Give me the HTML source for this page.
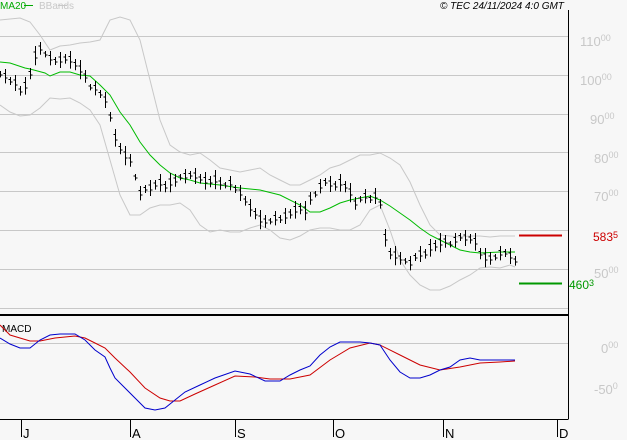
<!DOCTYPE html>
<html><head><meta charset="utf-8"><style>
html,body{margin:0;padding:0;background:#f7f7f7;}
svg{display:block;font-family:"Liberation Sans",sans-serif;}
</style></head><body>
<svg id="s" width="627" height="440" xmlns="http://www.w3.org/2000/svg">
<rect width="627" height="440" fill="#f7f7f7"/>
<g stroke="#c8c8c8" stroke-width="1">
<line x1="0" y1="36.5" x2="568" y2="36.5"/><line x1="0" y1="75.5" x2="568" y2="75.5"/>
<line x1="0" y1="114.5" x2="568" y2="114.5"/><line x1="0" y1="152.5" x2="568" y2="152.5"/>
<line x1="0" y1="191.5" x2="568" y2="191.5"/><line x1="0" y1="230.5" x2="568" y2="230.5"/>
<line x1="0" y1="269.5" x2="568" y2="269.5"/><line x1="0" y1="308.5" x2="568" y2="308.5"/>
<line x1="0" y1="343.5" x2="568" y2="343.5"/>
</g>
<g fill="#c8c8c8" font-size="13">
<text x="580" y="46">110<tspan font-size="9" dy="-5">00</tspan></text>
<text x="580" y="85">100<tspan font-size="9" dy="-5">00</tspan></text>
<text x="590" y="124">90<tspan font-size="9" dy="-5">00</tspan></text>
<text x="594" y="163">80<tspan font-size="9" dy="-5">00</tspan></text>
<text x="594" y="201">70<tspan font-size="9" dy="-5">00</tspan></text>
<text x="594" y="278">50<tspan font-size="9" dy="-5">00</tspan></text>
<text x="601" y="353">0<tspan font-size="9" dy="-5">00</tspan></text>
<text x="594" y="394">-50<tspan font-size="9" dy="-5">0</tspan></text>
</g>
<text x="593" y="241" fill="#cc0000" font-size="12">583<tspan font-size="9" dy="-3">5</tspan></text>
<text x="569" y="289" fill="#009900" font-size="12">460<tspan font-size="9" dy="-3">3</tspan></text>
<line x1="519" y1="235.5" x2="562" y2="235.5" stroke="#cc0000" stroke-width="2"/>
<line x1="519" y1="283.5" x2="562" y2="283.5" stroke="#009900" stroke-width="2"/>
<line x1="568.5" y1="10" x2="568.5" y2="419" stroke="#000"/>
<line x1="0" y1="315" x2="568" y2="315" stroke="#000" stroke-width="2"/>
<line x1="0" y1="419.5" x2="568.5" y2="419.5" stroke="#000"/>
<g stroke="#000"><line x1="21.5" y1="419" x2="21.5" y2="437"/><line x1="130.5" y1="419" x2="130.5" y2="437"/><line x1="235.5" y1="419" x2="235.5" y2="437"/><line x1="333.5" y1="419" x2="333.5" y2="437"/><line x1="443.5" y1="419" x2="443.5" y2="437"/><line x1="557.5" y1="419" x2="557.5" y2="437"/></g>
<g font-size="13" fill="#000"><text x="23" y="438">J</text><text x="132" y="438">A</text><text x="237" y="438">S</text><text x="335" y="438">O</text><text x="445" y="438">N</text><text x="559" y="438">D</text></g>
<text x="2" y="332" font-size="10" fill="#000">MACD</text>
<text x="0" y="9" font-size="10" fill="#00aa00">MA20</text><line x1="24" y1="5.5" x2="33" y2="5.5" stroke="#00aa00"/>
<text x="39" y="9" font-size="10" fill="#c8c8c8">BBands</text><line x1="58" y1="5.5" x2="67" y2="5.5" stroke="#c8c8c8"/>
<text x="440" y="9" font-size="10" font-style="italic" fill="#000">© TEC 24/11/2024 4:0 GMT</text>
<g id="g"></g>
</svg>
<script>
function P(a){var s=[];for(var i=0;i<a.length;i+=2)s.push(a[i]+','+a[i+1]);return s.join(' ');}
var g=document.getElementById('g'),ns='http://www.w3.org/2000/svg';
function line(a,c,w){var p=document.createElementNS(ns,'polyline');p.setAttribute('points',P(a));p.setAttribute('fill','none');p.setAttribute('stroke',c);p.setAttribute('stroke-width',w||1);g.appendChild(p);}
line([0,20,10,19,20,18,30,22,40,35,50,50,60,46,70,45,80,43,90,42,100,40,105,30,110,20,120,17,130,20,140,40,150,80,160,120,170,145,180,152,190,155,200,153,210,160,220,168,230,170,240,172,250,170,260,168,270,175,280,180,290,185,300,185,310,180,320,175,330,168,340,165,350,160,360,155,370,155,380,153,390,158,400,165,410,182,420,205,430,225,440,235,450,236,460,237,470,236,480,236,490,237,500,236,515,236],'#c8c8c8');
line([0,105,10,112,20,116,30,115,40,108,50,98,60,99,70,98,80,103,90,110,100,125,110,160,120,195,130,215,140,215,150,208,160,205,170,205,180,203,190,210,200,225,210,232,220,230,230,232,240,232,250,228,260,225,270,230,280,238,290,240,300,236,310,230,320,228,330,228,340,230,350,230,360,225,370,210,380,205,390,230,400,260,410,275,420,285,430,290,440,290,450,286,460,280,470,275,480,268,490,267,500,268,510,265,515,267],'#c8c8c8');
line([0,62,10,63,25,68,30,69,45,73,50,76,60,72,70,72,80,75,90,76,100,85,110,95,120,112,130,125,140,142,150,155,160,165,170,173,180,178,190,180,200,183,220,185,240,188,260,190,280,195,300,205,310,212,320,212,330,208,340,203,350,200,360,198,370,196,380,200,390,206,400,213,410,220,420,228,430,235,440,240,450,245,460,250,470,252,480,253,500,252,515,252],'#00bb00');
var c=[0,75,5,78,10,82,15,85,20,92,25,88,30,75,35,58,40,50,45,55,50,60,55,62,60,62,65,60,70,62,75,66,80,72,85,78,90,88,95,90,100,95,105,102,110,118,115,140,120,150,125,158,130,162,135,178,140,195,145,190,150,190,155,186,160,185,165,188,170,185,175,182,180,178,185,178,190,176,195,178,200,180,205,183,210,183,215,182,220,185,225,186,230,185,235,190,240,195,245,202,250,210,255,215,260,222,265,223,270,222,275,220,280,220,285,218,290,215,295,212,300,210,305,213,310,200,315,195,320,188,325,183,330,186,335,187,340,185,345,188,350,195,355,205,360,200,365,198,370,200,375,198,380,205,385,240,390,255,395,258,400,260,405,262,410,265,415,258,420,256,425,255,430,250,435,247,440,245,445,243,450,245,455,242,460,238,465,240,470,240,475,244,480,255,485,260,490,260,495,258,500,255,505,254,510,258,515,262];
for(var i=0;i<c.length;i+=2){var x=c[i]+0.5,y=c[i+1],h=4+((i*7)%9);var p=document.createElementNS(ns,'path');p.setAttribute('d','M'+x+' '+(y-h)+'V'+(y+h*0.6)+'M'+x+' '+y+'h2M'+x+' '+(y-h*0.5)+'h-2');p.setAttribute('stroke','#000');p.setAttribute('fill','none');g.appendChild(p);}
line([0,325,10,335,30,341,40,341,55,338,75,336,85,338,95,343,105,348,115,358,130,372,145,388,160,398,170,401,180,401,195,394,215,385,235,376,255,377,270,379,290,379,310,375,330,360,350,348,370,343,380,345,400,355,420,365,440,370,460,367,480,363,500,362,515,361],'#cc0000');
line([0,338,10,344,20,348,30,348,40,340,50,335,60,334,75,334,85,340,95,350,105,357,110,368,115,378,125,388,135,398,145,408,155,410,165,408,175,400,185,392,200,385,215,378,235,371,250,374,265,381,280,381,290,375,300,370,310,366,320,355,330,347,340,342,360,342,370,343,380,345,390,360,400,372,410,378,420,378,430,375,440,370,450,367,460,360,470,358,480,360,490,360,500,360,515,360],'#0000cc');
</script>
</body></html>
